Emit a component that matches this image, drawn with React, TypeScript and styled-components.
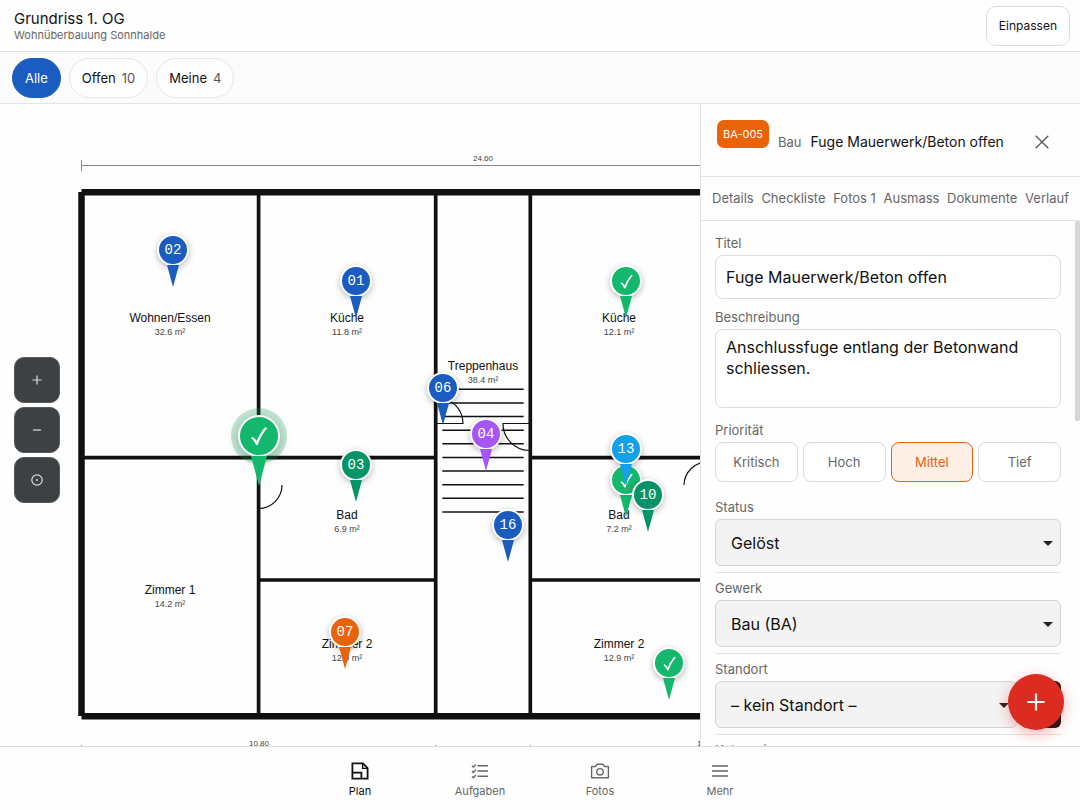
import React from 'react';
import styled, { createGlobalStyle, css } from 'styled-components';

const GlobalStyle = createGlobalStyle`
  *, *::before, *::after { box-sizing: border-box; }
  body {
    margin: 0;
    background: #fefefe;
    color: #111;
    font-family: Inter, "Liberation Sans", sans-serif;
    font-size: 13px;
  }
  button, input, textarea, select { font: inherit; color: inherit; }
  button { cursor: pointer; }
`;

const line = '#e3e3e3';
const muted = '#666';

const Shell = styled.div`
  display: flex;
  flex-direction: column;
  height: 100vh;
  overflow: hidden;
`;

const Header = styled.header`
  display: flex;
  align-items: center;
  justify-content: space-between;
  height: 52px;
  padding: 0 10px 0 14px;
  border-bottom: 1px solid ${line};
`;

const PageTitle = styled.h1`
  margin: 0;
  font-size: 15px;
  line-height: 18px;
  font-weight: 400;
`;

const PageSubtitle = styled.p`
  margin: 0;
  font-size: 11px;
  line-height: 14px;
  color: ${muted};
`;

const FitButton = styled.button`
  height: 40px;
  padding: 0 12px;
  border: 1px solid #dcdcdc;
  border-radius: 10px;
  background: #fff;
  font-size: 12px;
`;

const FilterBar = styled.div`
  display: flex;
  align-items: center;
  gap: 8px;
  height: 52px;
  padding: 0 12px;
  background: #fbfbfb;
  border-bottom: 1px solid ${line};
`;

const Chip = styled.button<{ $active?: boolean }>`
  display: flex;
  align-items: center;
  gap: 6px;
  height: 40px;
  padding: 0 12px;
  border: 1px solid ${p => (p.$active ? '#1a5cbf' : '#e6e6e6')};
  border-radius: 20px;
  background: ${p => (p.$active ? '#1a5cbf' : '#fdfdfd')};
  color: ${p => (p.$active ? '#fff' : '#111')};
`;

const ChipCount = styled.span`
  color: #555;
`;

const Main = styled.main`
  display: flex;
  flex: 1;
  min-height: 0;
`;

const Canvas = styled.section`
  position: relative;
  flex: 1;
  min-width: 0;
  overflow: hidden;
`;

const PlanDrawing = styled.svg`
  display: block;
  position: absolute;
  top: 0;
  left: 0;
  font-family: "Liberation Sans", Arial, sans-serif;
  text-anchor: middle;
`;

const RoomName = styled.text`
  font-size: 12px;
  fill: #111;
`;

const RoomArea = styled.text`
  font-size: 9px;
  fill: #444;
`;

const Dimension = styled.text`
  font-size: 8px;
  fill: #444;
`;

const ZoomControls = styled.div`
  position: absolute;
  top: 253px;
  left: 14px;
  display: grid;
  gap: 4px;
`;

const ZoomButton = styled.button`
  display: grid;
  place-items: center;
  width: 46px;
  height: 46px;
  padding: 0;
  border: 1px solid #575a5c;
  border-radius: 10px;
  background: #3d4143;
  color: #ddd;
`;

const Pin = styled.button<{ $x: number; $y: number; $color: string; $selected?: boolean }>`
  position: absolute;
  left: ${p => p.$x}px;
  top: ${p => p.$y}px;
  display: flex;
  flex-direction: column;
  align-items: center;
  padding: 0;
  border: 0;
  background: none;
  color: ${p => p.$color};
  transform: translate(-50%, ${p => (p.$selected ? -21 : -16)}px);
`;

const PinHead = styled.span<{ $selected?: boolean }>`
  position: relative;
  display: grid;
  place-items: center;
  width: 32px;
  height: 32px;
  border: 2px solid #fff;
  border-radius: 50%;
  background: currentColor;
  box-shadow: 0 2px 6px rgba(0, 0, 0, 0.28);
  ${p => p.$selected && css`
    width: 42px;
    height: 42px;
    box-shadow: 0 0 0 7px rgba(20, 160, 90, 0.26), 0 3px 12px rgba(0, 0, 0, 0.28);
  `}
`;

const PinNumber = styled.span`
  color: #fff;
  font-family: "Liberation Mono", monospace;
  font-size: 14px;
  line-height: 16px;
`;

const PinTip = styled.span<{ $selected?: boolean }>`
  position: relative;
  width: ${p => (p.$selected ? 16 : 12)}px;
  height: ${p => (p.$selected ? 30 : 22)}px;
  margin-top: -1px;
  background: currentColor;
  clip-path: polygon(0 0, 100% 0, 50% 100%);
`;

const Panel = styled.aside`
  display: flex;
  flex-direction: column;
  width: 380px;
  border-left: 1px solid ${line};
  background: #fefefe;
`;

const PanelHeader = styled.div`
  display: flex;
  align-items: center;
  gap: 9px;
  height: 73px;
  padding: 16px 16px 12px;
  border-bottom: 1px solid ${line};
`;

const Badge = styled.span`
  align-self: flex-start;
  padding: 0 6px;
  border-radius: 7px;
  background: #e8630a;
  color: #fff;
  font-size: 11px;
  line-height: 28px;
  white-space: nowrap;
`;

const Trade = styled.span`
  color: ${muted};
`;

const PanelTitle = styled.h2`
  flex: 1;
  margin: 0;
  font-size: 14px;
  line-height: 16px;
  font-weight: 400;
  white-space: nowrap;
`;

const CloseButton = styled.button`
  display: grid;
  place-items: center;
  width: 44px;
  height: 44px;
  padding: 0;
  border: 0;
  background: none;
  color: #555;
`;

const Tabs = styled.nav`
  display: flex;
  align-items: center;
  justify-content: space-between;
  height: 44px;
  padding: 0 11px;
  border-bottom: 1px solid ${line};
`;

const Tab = styled.button`
  padding: 0 0 2px;
  border: 0;
  background: none;
  color: ${muted};
  white-space: nowrap;
`;

const PanelScroll = styled.div`
  position: relative;
  display: flex;
  flex: 1;
  min-height: 0;
`;

const ScrollThumb = styled.span`
  position: absolute;
  top: 0;
  right: 0;
  width: 5px;
  height: 200px;
  border-radius: 2px;
  background: #d6d6d4;
`;

const Form = styled.form`
  flex: 1;
  padding: 14px 19px 0 14px;
  overflow: auto;
  scrollbar-width: none;
`;

const Field = styled.div<{ $gap: number }>`
  display: flex;
  flex-direction: column;
  gap: 4px;
  margin-bottom: ${p => p.$gap}px;
`;

const Label = styled.label`
  font-size: 13px;
  line-height: 16px;
  color: ${muted};
`;

const TextInput = styled.input`
  width: 100%;
  height: 44px;
  padding: 0 10px;
  border: 1px solid #dcdcdc;
  border-radius: 8px;
  background: #fff;
  font-size: 16px;
`;

const TextArea = styled.textarea`
  width: 100%;
  height: 79px;
  padding: 7px 10px;
  border: 1px solid #dcdcdc;
  border-radius: 8px;
  background: #fff;
  font-size: 16px;
  line-height: 21px;
  resize: none;
`;

const Options = styled.div`
  display: grid;
  grid-template-columns: repeat(4, 1fr);
  gap: 5px;
`;

const Option = styled.button<{ $active?: boolean }>`
  height: 40px;
  padding: 0;
  border: 1px solid #dcdcdc;
  border-radius: 8px;
  background: #fff;
  color: ${muted};
  ${p => p.$active && css`
    border-color: #dd6416;
    background: #fdeee6;
    color: #e06314;
  `}
`;

const SelectField = styled(Field)`
  padding-bottom: 6px;
  border-bottom: 1px solid #e6e4e0;
`;

const SelectRow = styled.div`
  display: flex;
  gap: 4px;
`;

const SelectBox = styled.div`
  position: relative;
  flex: 1;
`;

const Select = styled.select`
  display: block;
  width: 100%;
  height: 47px;
  padding: 0 15px;
  border: 1px solid #d4d4d4;
  border-radius: 6px;
  background: #f3f3f3;
  font-size: 16px;
  appearance: none;
`;

const Caret = styled.svg`
  position: absolute;
  top: 22px;
  right: 8px;
  pointer-events: none;
`;

const AddLocation = styled.button`
  width: 40px;
  height: 47px;
  border: 0;
  border-radius: 6px;
  background: #111;
`;

const Fab = styled.button`
  position: fixed;
  right: 16px;
  bottom: 80px;
  display: grid;
  place-items: center;
  width: 56px;
  height: 56px;
  padding: 0;
  border: 0;
  border-radius: 50%;
  background: #dc2c21;
  color: #fff;
  box-shadow: 0 4px 14px rgba(220, 44, 33, 0.35);
`;

const BottomNav = styled.nav`
  display: grid;
  grid-template-columns: repeat(4, 120px);
  justify-content: center;
  height: 64px;
  border-top: 1px solid #dcdcdc;
`;

const NavItem = styled.a<{ $active?: boolean }>`
  display: flex;
  flex-direction: column;
  align-items: center;
  gap: 3px;
  padding-top: 14px;
  color: ${p => (p.$active ? '#111' : muted)};
  font-size: 11px;
  line-height: 14px;
  text-decoration: none;
`;

const WALL = '#111';
const BLUE = '#1a5cbf';
const MINT = '#14b86c';
const GREEN = '#059467';

const rooms = [
  { name: 'Wohnen/Essen', area: '32.6 m²', x: 170, y: 218 },
  { name: 'Küche', area: '11.8 m²', x: 347, y: 218 },
  { name: 'Küche', area: '12.1 m²', x: 619, y: 218 },
  { name: 'Treppenhaus', area: '38.4 m²', x: 483, y: 266 },
  { name: 'Bad', area: '6.9 m²', x: 347, y: 415 },
  { name: 'Bad', area: '7.2 m²', x: 619, y: 415 },
  { name: 'Zimmer 1', area: '14.2 m²', x: 170, y: 490 },
  { name: 'Zimmer 2', area: '12.9 m²', x: 347, y: 544 },
  { name: 'Zimmer 2', area: '12.9 m²', x: 619, y: 544 },
];

type PinData = { label?: string; x: number; y: number; color: string; selected?: boolean };

const pins: PinData[] = [
  { label: '02', x: 173, y: 146, color: BLUE },
  { label: '01', x: 356, y: 177, color: BLUE },
  { x: 626, y: 177, color: MINT },
  { label: '06', x: 443, y: 284, color: BLUE },
  { label: '04', x: 486, y: 330, color: '#a855f7' },
  { x: 259, y: 332, color: MINT, selected: true },
  { label: '03', x: 356, y: 361, color: GREEN },
  { x: 626, y: 376, color: MINT },
  { label: '13', x: 626, y: 345, color: '#12a0e8' },
  { label: '10', x: 648, y: 391, color: GREEN },
  { label: '16', x: 508, y: 421, color: BLUE },
  { label: '07', x: 345, y: 528, color: '#e8630a' },
  { x: 669, y: 559, color: MINT },
];

function CheckMark({ size }: { size: number }) {
  return (
    <svg width={size} height={size} viewBox="0 0 16 16" fill="none" stroke="#fff" strokeWidth="1.6" strokeLinecap="round" strokeLinejoin="round">
      <path d="M3.300 9.600C4.300 10 5.600 11.800 6.400 13.800C7.800 9.800 9.900 5.800 12.900 2.400" />
    </svg>
  );
}

function FloorPlan() {
  return (
    <PlanDrawing width="966" height="720" viewBox="0 0 966 720" role="img" aria-label="Grundriss">
      <g stroke={WALL} fill="none">
        <g strokeWidth="6.5">
          <path d="M81.5 88V612M884.5 88V612M81.5 88.3H884.5M81.5 612.2H884.5" />
        </g>
        <g strokeWidth="3.7">
          <path d="M258.6 88V612M435.7 88V612M530.3 88V612M707.4 88V612" />
          <path d="M82 353.6H435.7M530.3 353.6H884M258.6 476H435.7M530.3 476H707.4" />
        </g>
        <g strokeWidth="1.5">
          {Array.from({ length: 10 }, (_, i) => (
            <path key={i} d={`M442.3 ${285.3 + i * 13.62}H523.7`} />
          ))}
        </g>
        <g strokeWidth="1.2">
          <path d="M282 381A23.5 23.5 0 0 1 258.6 404.5" />
          <path d="M684 381A23.5 23.5 0 0 1 707.4 358" />
          <path d="M437 319.5H463A26 26 0 0 0 437 293.5" />
          <path d="M529 319.5H503A26.5 27 0 0 0 529 346.5" />
        </g>
      </g>
      <g stroke="#888" fill="none">
        <path d="M81.5 61.5H884.5M81.5 56V67M884.5 56V67" />
        <path d="M81.5 646.5H884.5M81.5 641V652M435.5 641V652M530.5 641V652M884.5 641V652" />
      </g>
      <Dimension x="483" y="57">24.60</Dimension>
      <Dimension x="259" y="642">10.80</Dimension>
      <Dimension x="707" y="642">10.80</Dimension>
      {rooms.map((r, i) => (
        <g key={i}>
          <RoomName x={r.x} y={r.y}>{r.name}</RoomName>
          <RoomArea x={r.x} y={r.y + 13}>{r.area}</RoomArea>
        </g>
      ))}
    </PlanDrawing>
  );
}

function DropDown({ id, value }: { id: string; value: string }) {
  return (
    <SelectBox>
      <Select id={id}>
        <option>{value}</option>
      </Select>
      <Caret width="10" height="5" viewBox="0 0 10 5"><path d="M0 0H10L5 5Z" fill="#222" /></Caret>
    </SelectBox>
  );
}

const PlanIcon = () => (
  <svg width="20" height="20" viewBox="0 0 20 20" fill="none" stroke="currentColor" strokeWidth="1.8">
    <path d="M2.400 2.400H12.800L17.600 7.200V17.600H2.400Z" />
    <path d="M12.600 2.600V7.400H17.400" strokeWidth="1.400" />
    <path d="M2.400 11.600H11.400V17.600" />
  </svg>
);

const TasksIcon = () => (
  <svg width="20" height="20" viewBox="0 0 20 20" fill="none" stroke="currentColor" strokeWidth="1.4">
    <path d="M7.5 4.700H18M7.5 10H18M7.5 15.300H18" strokeWidth="1.5" />
    <path d="M2 4.800l1.300 1.300L6 3.400M2 10.100l1.300 1.300L6 8.700M2 15.400l1.300 1.300L6 14" />
  </svg>
);

const CameraIcon = () => (
  <svg width="20" height="20" viewBox="0 0 20 20" fill="none" stroke="currentColor" strokeWidth="1.4">
    <path d="M1.600 5.500H5.500L7.200 3.200H12.800L14.500 5.500H18.400V16.800H1.600Z" strokeLinejoin="round" />
    <circle cx="10" cy="10.800" r="3.200" />
  </svg>
);

const MenuIcon = () => (
  <svg width="20" height="20" viewBox="0 0 20 20" fill="none" stroke="currentColor" strokeWidth="1.5">
    <path d="M2 5H18M2 10H18M2 15H18" />
  </svg>
);

export default function App() {
  return (
    <Shell>
      <GlobalStyle />
      <Header>
        <div>
          <PageTitle>Grundriss 1. OG</PageTitle>
          <PageSubtitle>Wohnüberbauung Sonnhalde</PageSubtitle>
        </div>
        <FitButton>Einpassen</FitButton>
      </Header>
      <FilterBar>
        <Chip $active>Alle</Chip>
        <Chip>Offen <ChipCount>10</ChipCount></Chip>
        <Chip>Meine <ChipCount>4</ChipCount></Chip>
      </FilterBar>
      <Main>
        <Canvas>
          <FloorPlan />
          {pins.map((p, i) => (
            <Pin key={i} $x={p.x} $y={p.y} $color={p.color} $selected={p.selected} aria-label={p.label ?? 'Gelöst'}>
              <PinHead $selected={p.selected}>
                {p.label ? <PinNumber>{p.label}</PinNumber> : <CheckMark size={p.selected ? 22 : 17} />}
              </PinHead>
              <PinTip $selected={p.selected} />
            </Pin>
          ))}
          <ZoomControls>
            <ZoomButton aria-label="Vergrössern">
              <svg width="12" height="12" viewBox="0 0 12 12" stroke="currentColor" strokeWidth="1.2"><path d="M6 1.500V10.500M1.500 6H10.500" /></svg>
            </ZoomButton>
            <ZoomButton aria-label="Verkleinern">
              <svg width="12" height="12" viewBox="0 0 12 12" stroke="currentColor" strokeWidth="1.2"><path d="M2 6H10" /></svg>
            </ZoomButton>
            <ZoomButton aria-label="Zentrieren">
              <svg width="12" height="12" viewBox="0 0 12 12" fill="none" stroke="currentColor" strokeWidth="1.2">
                <circle cx="6" cy="6" r="5.200" />
                <circle cx="6" cy="6" r="1" fill="currentColor" stroke="none" />
              </svg>
            </ZoomButton>
          </ZoomControls>
        </Canvas>
        <Panel>
          <PanelHeader>
            <Badge>BA-005</Badge>
            <Trade>Bau</Trade>
            <PanelTitle>Fuge Mauerwerk/Beton offen</PanelTitle>
            <CloseButton aria-label="Schliessen">
              <svg width="14" height="14" viewBox="0 0 14 14" stroke="currentColor" strokeWidth="1.3"><path d="M.7.7 13.3 13.3M13.3.7.7 13.3" /></svg>
            </CloseButton>
          </PanelHeader>
          <Tabs>
            {['Details', 'Checkliste', 'Fotos 1', 'Ausmass', 'Dokumente', 'Verlauf'].map(t => <Tab key={t}>{t}</Tab>)}
          </Tabs>
          <PanelScroll>
            <Form>
              <Field $gap={10}>
                <Label htmlFor="titel">Titel</Label>
                <TextInput id="titel" defaultValue="Fuge Mauerwerk/Beton offen" />
              </Field>
              <Field $gap={14}>
                <Label htmlFor="beschreibung">Beschreibung</Label>
                <TextArea id="beschreibung" defaultValue="Anschlussfuge entlang der Betonwand schliessen." />
              </Field>
              <Field $gap={17} role="group" aria-labelledby="prioritaet">
                <Label as="span" id="prioritaet">Priorität</Label>
                <Options>
                  {['Kritisch', 'Hoch', 'Mittel', 'Tief'].map(o => (
                    <Option key={o} type="button" $active={o === 'Mittel'}>{o}</Option>
                  ))}
                </Options>
              </Field>
              <SelectField $gap={7}>
                <Label htmlFor="status">Status</Label>
                <DropDown id="status" value="Gelöst" />
              </SelectField>
              <SelectField $gap={7}>
                <Label htmlFor="gewerk">Gewerk</Label>
                <DropDown id="gewerk" value="Bau (BA)" />
              </SelectField>
              <SelectField $gap={7}>
                <Label htmlFor="standort">Standort</Label>
                <SelectRow>
                  <DropDown id="standort" value="– kein Standort –" />
                  <AddLocation type="button" aria-label="Standort hinzufügen" />
                </SelectRow>
              </SelectField>
              <Label as="span">Kategorie</Label>
            </Form>
            <ScrollThumb />
          </PanelScroll>
        </Panel>
      </Main>
      <BottomNav>
        <NavItem href="#plan" $active><PlanIcon />Plan</NavItem>
        <NavItem href="#aufgaben"><TasksIcon />Aufgaben</NavItem>
        <NavItem href="#fotos"><CameraIcon />Fotos</NavItem>
        <NavItem href="#mehr"><MenuIcon />Mehr</NavItem>
      </BottomNav>
      <Fab aria-label="Neu">
        <svg width="20" height="20" viewBox="0 0 20 20" stroke="currentColor" strokeWidth="2.2"><path d="M10 1.500V18.500M1.500 10H18.500" /></svg>
      </Fab>
    </Shell>
  );
}
